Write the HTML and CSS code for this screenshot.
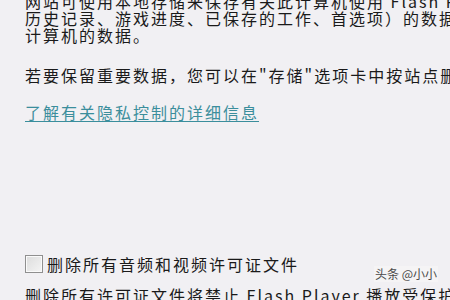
FILE: index.html
```html
<!DOCTYPE html>
<html lang="zh-CN">
<head>
<meta charset="utf-8">
<link rel="stylesheet" href="styles.css">
</head>
<body>
<div class="page">
  <div class="content">
    <p class="para first">网站可使用本地存储来保存有关此计算机使用 Flash Player 的网站的数据（例如浏览<br>历史记录、游戏进度、已保存的工作、首选项）的数据。这些数据会保存在<br>计算机的数据。</p>
    <p class="para keep">若要保留重要数据，您可以在"存储"选项卡中按站点删除数据。</p>
    <p class="para"><a class="link" href="#">了解有关隐私控制的详细信息</a></p>
    <div class="spacer"></div>
    <label class="check-row"><span class="box"></span><span class="label">删除所有音频和视频许可证文件</span></label>
    <p class="para last">删除所有许可证文件将禁止 Flash Player 播放受保护的内容。</p>
  </div>
  <div class="watermark">头条 @小小</div>
</div>
</body>
</html>
```
FILE: styles.css
```css
html, body {
  margin: 0;
  padding: 0;
}
body {
  background: #f1f0f3;
  font-family: "Noto Sans CJK SC", "Noto Sans", sans-serif;
  color: #1a1a1a;
  overflow: hidden;
  width: 450px;
  height: 300px;
}
.page {
  position: relative;
  width: 450px;
  height: 300px;
  overflow: hidden;
}
.content {
  margin-top: -7px;
  padding-left: 25px;
  width: 600px;
}
.para {
  margin: 0;
  font-size: 16px;
  line-height: 17px;
  letter-spacing: 2px;
  white-space: nowrap;
}
.para.first {
  margin-bottom: 23px;
}
.para.keep {
  margin-bottom: 20px;
}
.link {
  color: #3b8e9c;
  text-decoration: underline;
  text-underline-offset: 2px;
}
.spacer {
  height: 134px;
}
.check-row {
  display: flex;
  align-items: center;
  gap: 4px;
  font-size: 16px;
  letter-spacing: 2px;
  line-height: 18px;
}
.box {
  width: 16px;
  height: 16px;
  border: 1px solid #8f8f8f;
  background: linear-gradient(135deg, #dcdcdc, #f4f4f4);
  box-shadow: inset 0 0 0 1px #fafafa;
}
.para.last {
  margin-top: 14px;
}
.watermark {
  position: absolute;
  right: 12px;
  top: 266px;
  font-size: 12px;
  line-height: 16px;
  color: #4a4a4a;
  background: rgba(245, 245, 245, 0.75);
  padding: 0 1px;
  font-family: "Noto Sans CJK SC", sans-serif;
}
```
